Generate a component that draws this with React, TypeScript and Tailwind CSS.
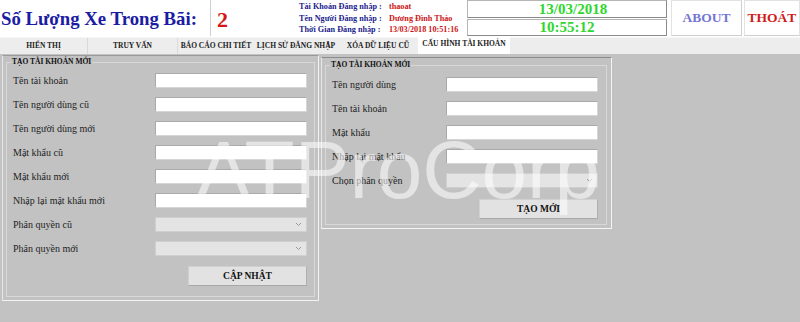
import React from "react";

const serif = "font-['Liberation_Serif',serif]";

function Input() {
  return <div className="h-[15px] w-[152px] bg-white border border-[#a9a9a9] border-b-[#d6d6d6] border-r-[#d6d6d6]" />;
}

function Select() {
  return (
    <div className="h-[15px] w-[152px] bg-[#e4e4e4] border border-[#cfcfcf] flex items-center justify-end pr-[4px]">
      <svg width="7" height="5" viewBox="0 0 7 5">
        <path d="M1 1 L3.5 3.5 L6 1" stroke="#9a9a9a" strokeWidth="1" fill="none" />
      </svg>
    </div>
  );
}

function Row({ label, children }: { label: string; children: React.ReactNode }) {
  return (
    <div className="flex items-center justify-between h-[15px]">
      <span className={`${serif} text-[10px] text-[#222] leading-none`}>{label}</span>
      {children}
    </div>
  );
}

function Btn({ text }: { text: string }) {
  return (
    <div className={`${serif} h-[20px] w-[119px] bg-[#e2e2e2] border border-[#d0d0d0] border-b-[#a8a8a8] border-r-[#b0b0b0] flex items-center justify-center text-[9.5px] font-bold text-[#111]`}>
      {text}
    </div>
  );
}

export default function App() {
  const tabs = [
    { t: "HIỂN THỊ", w: "w-[88px]" },
    { t: "TRUY VẤN", w: "w-[90px]" },
    { t: "BÁO CÁO CHI TIẾT", w: "w-[76px]" },
    { t: "LỊCH SỬ ĐĂNG NHẬP", w: "w-[84px]" },
    { t: "XÓA DỮ LIỆU CŨ", w: "w-[80px]" },
  ];
  return (
    <div className={`w-[800px] h-[322px] bg-[#c2c2c2] relative overflow-hidden ${serif}`}>
      {/* header */}
      <div className="h-[37px] bg-white flex">
        <div className="w-[210px] flex items-center pl-[1px] pt-[2px]">
          <span className="text-[18.8px] font-bold text-[#1c1ca3] whitespace-nowrap leading-none">Số Lượng Xe Trong Bãi:</span>
        </div>
        <div className="w-[1px] h-[36px] bg-[#cfcfcf]" />
        <div className="w-[74px] flex items-center pl-[6px] pt-[3px]">
          <span className="text-[22px] font-bold text-[#d41818] leading-none">2</span>
        </div>
        <div className="flex flex-col justify-start pt-[1px] pl-[14px] text-[8.2px] font-bold leading-[11.7px] w-[182px]">
          <div className="flex whitespace-nowrap"><span className="w-[90px] text-[#1c1c8c]">Tài Khoản Đăng nhập :</span><span className="text-[#cc1515]">thaoat</span></div>
          <div className="flex whitespace-nowrap"><span className="w-[90px] text-[#1c1c8c]">Tên Người Đăng nhập :</span><span className="text-[#cc1515]">Dương Đình Thảo</span></div>
          <div className="flex whitespace-nowrap"><span className="w-[90px] text-[#1c1c8c]">Thời Gian Đăng nhập :</span><span className="text-[#cc1515]">13/03/2018 10:51:16</span></div>
        </div>
        <div className="w-[200px] flex flex-col gap-[1px]">
          <div className="h-[18px] border border-[#b5b5b5] border-b-[#8a8a8a] border-r-[#8a8a8a] flex items-center justify-center">
            <span className="text-[15px] font-bold text-[#2fd62f] leading-none pl-[12px]">13/03/2018</span>
          </div>
          <div className="h-[17px] border border-[#b5b5b5] border-b-[#8a8a8a] border-r-[#8a8a8a] flex items-center justify-center">
            <span className="text-[15px] font-bold text-[#2fd62f] leading-none">10:55:12</span>
          </div>
        </div>
        <div className="w-[4px]" />
        <div className="w-[71px] h-[36px] border border-[#e2e2e2] border-b-[#cfcfcf] border-r-[#cfcfcf] flex items-center justify-center">
          <span className="text-[13.5px] font-bold text-[#7676d6]">ABOUT</span>
        </div>
        <div className="w-[2px]" />
        <div className="flex-1 h-[36px] border border-[#e2e2e2] border-b-[#cfcfcf] flex items-center justify-center">
          <span className="text-[13.5px] font-bold text-[#cf1b1b]">THOÁT</span>
        </div>
      </div>
      {/* tab bar */}
      <div className="h-[17px] bg-[#ededed] border-t border-[#f6f6f6] flex items-stretch">
        {tabs.map((tab, i) => (
          <div key={tab.t} className={`${tab.w} flex items-center justify-center text-[7.5px] font-bold text-[#222] whitespace-nowrap ${i < 2 ? "border-r border-[#dadada]" : ""}`}>
            {tab.t}
          </div>
        ))}
        <div className="w-[92px] bg-white flex items-center justify-center text-[7.5px] font-bold text-[#222] whitespace-nowrap -mt-[2px] pb-[2px]">
          CẤU HÌNH TÀI KHOẢN
        </div>
      </div>
      {/* main */}
      <div className="flex items-start pt-[1px] pl-[2px]">
        {/* left panel */}
        <div className="w-[317px] h-[246px] border border-t-[#9a9a9a] border-l-[#e6e6e6] border-r-[#f2f2f2] border-b-[#f2f2f2] pt-[1px] px-[3px] pb-[3px]">
          <fieldset className="h-full border border-[#d8d8d8] pl-[6px] pr-[6px] pt-[6px] pb-[10px]">
            <legend className="text-[7.5px] font-bold text-[#111] leading-[10px] px-[1px] ml-[-2px]">TẠO TÀI KHOẢN MỚI</legend>
            <div className="flex flex-col gap-[9px] pr-[1px]">
              <Row label="Tên tài khoản"><Input /></Row>
              <Row label="Tên người dùng cũ"><Input /></Row>
              <Row label="Tên người dùng mới"><Input /></Row>
              <Row label="Mật khẩu cũ"><Input /></Row>
              <Row label="Mật khẩu mới"><Input /></Row>
              <Row label="Nhập lại mật khẩu mới"><Input /></Row>
              <Row label="Phân quyền cũ"><Select /></Row>
              <Row label="Phân quyền mới"><Select /></Row>
              <div className="flex justify-end pt-[1px]"><Btn text="CẬP NHẬT" /></div>
            </div>
          </fieldset>
        </div>
        {/* right panel */}
        <div className="ml-[2px] mt-[2px] w-[291px] h-[172px] border border-t-[#8c8c8c] border-l-[#e6e6e6] border-r-[#f4f4f4] border-b-[#f4f4f4] pt-[2px] pl-[3px] pr-[4px] pb-[3px]">
          <fieldset className="h-full border border-[#d8d8d8] pl-[6px] pr-[8px] pt-[7px]">
            <legend className="text-[7.5px] font-bold text-[#111] leading-[10px] px-[1px] ml-[-2px]">TẠO TÀI KHOẢN MỚI</legend>
            <div className="flex flex-col gap-[9px]">
              <Row label="Tên người dùng"><Input /></Row>
              <Row label="Tên tài khoản"><Input /></Row>
              <Row label="Mật khẩu"><Input /></Row>
              <Row label="Nhập lại mật khẩu"><Input /></Row>
              <Row label="Chọn phân quyền"><Select /></Row>
              <div className="flex justify-end pt-[2px]"><Btn text="TẠO MỚI" /></div>
            </div>
          </fieldset>
        </div>
      </div>
      {/* watermark */}
      <div className="absolute left-[196px] top-[129px] pointer-events-none font-['Liberation_Sans',sans-serif] text-[82px] leading-none text-white/55 whitespace-nowrap">
        ATProCorp
      </div>
    </div>
  );
}
